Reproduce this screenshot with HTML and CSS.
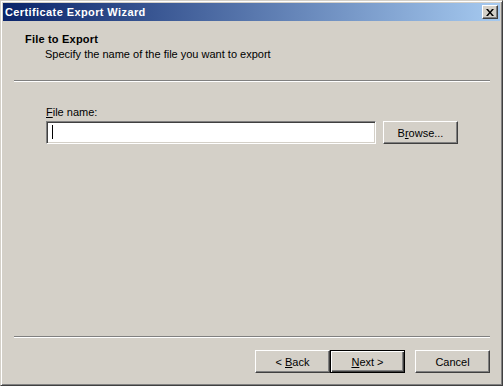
FILE: index.html
```html
<!doctype html>
<html lang="en">
    <head>
        <meta charset="utf-8">
        <title>Certificate Export Wizard</title>
        <link rel="stylesheet" href="styles.css">
    </head>
    <body>
        <div class="window">
            <div class="titleBar">
                <span class="titleText">Certificate Export Wizard</span>
                <button class="closeButton" aria-label="Close">
                    <svg width="8" height="7" viewBox="0 0 8 7">
                        <path d="M0 0h2l2 2.5L6 0h2L5 3.5 8 7H6L4 4.5 2 7H0l3-3.5z" fill="#000"/>
                    </svg>
                </button>
            </div>

            <div class="panel">
                <div class="header">
                    <div class="headerTitle">File to Export</div>
                    <div class="headerText">Specify the name of the file you want to export</div>
                </div>

                <div class="rule"></div>

                <div class="content">
                    <label class="fieldLabel" for="fileName"><u>F</u>ile name:</label>
                    <div class="fieldRow">
                        <div class="textBox" id="fileName"><span class="caret"></span></div>
                        <button class="button browseButton">B<u>r</u>owse...</button>
                    </div>
                </div>

                <div class="rule"></div>

                <div class="footer">
                    <button class="button">&lt; <u>B</u>ack</button>
                    <button class="button defaultButton"><u>N</u>ext &gt;</button>
                    <button class="button cancelButton">Cancel</button>
                </div>
            </div>
        </div>
    </body>
</html>
```

FILE: styles.css
```css
body {
    margin: 0;
    font-family: 'Liberation Sans', Arial, sans-serif;
    font-size: 11px;
    color: #000;
    background: #d4d0c8;
}

.window {
    box-sizing: border-box;
    width: 503px;
    height: 386px;
    display: flex;
    flex-direction: column;
    padding: 2px;
    background: #d4d0c8;
    border: 1px solid;
    border-color: #d4d0c8 #404040 #404040 #d4d0c8;
    box-shadow: inset 1px 1px #fff, inset -1px -1px #808080;
}

.titleBar {
    height: 18px;
    display: flex;
    align-items: center;
    justify-content: space-between;
    padding: 0 2px 0 2px;
    background: linear-gradient(to right, #0a246a, #a6caf0);
}

.titleText {
    color: #fff;
    font-weight: bold;
    font-size: 11px;
    letter-spacing: 0.4px;
}

.closeButton {
    box-sizing: border-box;
    width: 16px;
    height: 14px;
    padding: 0;
    display: flex;
    align-items: center;
    justify-content: center;
    background: #d4d0c8;
    border: 1px solid;
    border-color: #fff #404040 #404040 #fff;
    box-shadow: inset -1px -1px #808080;
}

.panel {
    flex: 1;
    display: flex;
    flex-direction: column;
}

.header {
    padding: 12px 0 0 22px;
    line-height: 13px;
}

.headerTitle {
    font-weight: bold;
    letter-spacing: 0.2px;
}

.headerText {
    margin-top: 2px;
    padding-left: 20px;
}

.rule {
    height: 1px;
    margin: 19px 10px 0 11px;
    background: #808080;
    border-bottom: 1px solid #fff;
}

.content {
    flex: 1;
    padding: 24px 0 0 43px;
}

.content + .rule {
    margin-top: 0;
}

.fieldLabel {
    display: block;
    line-height: 13px;
}

.fieldRow {
    display: flex;
    margin-top: 2px;
}

.textBox {
    box-sizing: border-box;
    width: 330px;
    height: 23px;
    background: #fff;
    border: 1px solid;
    border-color: #808080 #fff #fff #808080;
    box-shadow: inset 1px 1px #404040, inset -1px -1px #d4d0c8;
    padding: 3px 0 0 5px;
}

.caret {
    display: block;
    width: 1px;
    height: 14px;
    background: #000;
}

.button {
    box-sizing: border-box;
    width: 75px;
    height: 23px;
    padding: 0;
    font-family: inherit;
    font-size: 11px;
    color: #000;
    background: #d4d0c8;
    border: 1px solid;
    border-color: #fff #404040 #404040 #fff;
    box-shadow: inset -1px -1px #808080;
}

.browseButton {
    margin-left: 7px;
}

.footer {
    display: flex;
    justify-content: flex-end;
    padding: 12px 10px 10px 0;
}

.defaultButton {
    border: 1px solid #000;
    box-shadow: inset 1px 1px #fff, inset -1px -1px #404040, inset -2px -2px #808080;
}

.cancelButton {
    margin-left: 10px;
}
```
